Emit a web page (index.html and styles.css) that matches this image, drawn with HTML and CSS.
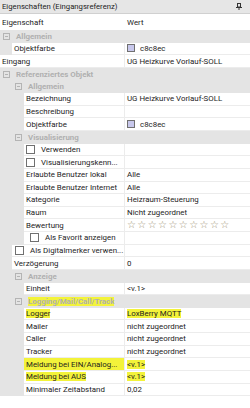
FILE: index.html
```html
<!DOCTYPE html>
<html>
<head>
<meta charset="utf-8">
<link rel="stylesheet" href="styles.css">
</head>
<body>
<div class="panel">
  <div class="titlebar">
    <span class="title">Eigenschaften (Eingangsreferenz)</span>
    <svg class="pin" width="6" height="7" viewBox="0 0 6 7"><rect x="1.5" y="0.5" width="3" height="3.5" fill="none" stroke="#333" stroke-width="1"/><rect x="0" y="4" width="6" height="1" fill="#333"/><rect x="2.5" y="5" width="1" height="2" fill="#333"/></svg>
  </div>
  <div class="row header"><div class="label">Eigenschaft</div><div class="value">Wert</div></div>

  <div class="row group"><span class="tog l0"></span><span class="gtext">Allgemein</span></div>
  <div class="row"><div class="ind i1"></div><div class="label">Objektfarbe</div><div class="value"><span class="swatch"></span>c8c8ec</div></div>
  <div class="row"><div class="label">Eingang</div><div class="value">UG Heizkurve Vorlauf-SOLL</div></div>

  <div class="row group"><span class="tog l0"></span><span class="gtext">Referenziertes Objekt</span></div>
  <div class="row group"><span class="tog l1"></span><span class="gtext">Allgemein</span></div>
  <div class="row"><div class="ind i2"></div><div class="label">Bezeichnung</div><div class="value">UG Heizkurve Vorlauf-SOLL</div></div>
  <div class="row"><div class="ind i2"></div><div class="label">Beschreibung</div><div class="value"></div></div>
  <div class="row"><div class="ind i2"></div><div class="label">Objektfarbe</div><div class="value"><span class="swatch"></span>c8c8ec</div></div>
  <div class="row group"><span class="tog l1"></span><span class="gtext">Visualisierung</span></div>
  <div class="row"><div class="ind i2"></div><div class="label"><span class="cb"></span>Verwenden</div><div class="value"></div></div>
  <div class="row"><div class="ind i2"></div><div class="label"><span class="cb"></span>Visualisierungskenn...</div><div class="value"></div></div>
  <div class="row"><div class="ind i2"></div><div class="label">Erlaubte Benutzer lokal</div><div class="value">Alle</div></div>
  <div class="row"><div class="ind i2"></div><div class="label">Erlaubte Benutzer Internet</div><div class="value">Alle</div></div>
  <div class="row"><div class="ind i2"></div><div class="label">Kategorie</div><div class="value">Heizraum-Steuerung</div></div>
  <div class="row"><div class="ind i2"></div><div class="label">Raum</div><div class="value">Nicht zugeordnet</div></div>
  <div class="row"><div class="ind i2"></div><div class="label">Bewertung</div><div class="value stars">☆☆☆☆☆☆☆☆☆☆</div></div>
  <div class="row"><div class="ind i2"></div><div class="label"><span class="cb cb2"></span>Als Favorit anzeigen</div><div class="value"></div></div>
  <div class="row"><div class="ind i1"></div><div class="label"><span class="cb cb3"></span>Als Digitalmerker verwen...</div><div class="value"></div></div>
  <div class="row"><div class="ind i1"></div><div class="label">Verzögerung</div><div class="value">0</div></div>
  <div class="row group"><span class="tog l1"></span><span class="gtext">Anzeige</span></div>
  <div class="row"><div class="ind i2"></div><div class="label">Einheit</div><div class="value">&lt;v.1&gt;</div></div>
  <div class="row group"><span class="tog l1"></span><span class="gtext hl">Logging/Mail/Call/Track</span></div>
  <div class="row"><div class="ind i2"></div><div class="label"><span class="hl">Logger</span></div><div class="value"><span class="hl">LoxBerry MQTT</span></div></div>
  <div class="row"><div class="ind i2"></div><div class="label">Mailer</div><div class="value">nicht zugeordnet</div></div>
  <div class="row"><div class="ind i2"></div><div class="label">Caller</div><div class="value">nicht zugeordnet</div></div>
  <div class="row"><div class="ind i2"></div><div class="label">Tracker</div><div class="value">nicht zugeordnet</div></div>
  <div class="row"><div class="ind i2"></div><div class="label hlcell">Meldung bei EIN/Analog...</div><div class="value"><span class="hl">&lt;v.1&gt;</span></div></div>
  <div class="row"><div class="ind i2"></div><div class="label"><span class="hl">Meldung bei AUS</span></div><div class="value"><span class="hl">&lt;v.1&gt;</span></div></div>
  <div class="row"><div class="ind i2"></div><div class="label">Minimaler Zeitabstand</div><div class="value">0,02</div></div>
</div>
</body>
</html>
```

FILE: styles.css
```css
html, body { margin: 0; padding: 0; background: #fff; }
body { width: 250px; height: 408px; overflow: hidden; font-family: Roboto, "Noto Sans", sans-serif; font-size: 7.9px; color: #1c1c1c; }
.panel { width: 250px; }
.titlebar { height: 14px; background: #e6e6e6; border-bottom: 1px solid #d0d0d0; display: flex; align-items: center; justify-content: space-between; padding: 0 8px 0 2px; box-sizing: border-box; }
.title { font-size: 7.7px; }
.pin { display: block; }
.row { display: flex; height: 12.64px; align-items: stretch; }
.row .label { width: 125px; flex: none; display: flex; align-items: center; padding-left: 2px; box-sizing: border-box; background: #fff; border-bottom: 1px solid #ececec; border-right: 1px solid #ececec; white-space: nowrap; overflow: hidden; }
.row .value { flex: 1; display: flex; align-items: center; padding-left: 2px; background: #fff; border-bottom: 1px solid #ececec; white-space: nowrap; }
.ind { flex: none; background: #e4e4e4; }
.ind.i1 { width: 12px; }
.ind.i2 { width: 24px; }
.i1 + .label { width: 113px; }
.i2 + .label { width: 101px; }
.header .label, .header .value { border: none; }
.header { height: 16px; }
.group { background: #e4e4e4; align-items: center; }
.tog { width: 5px; height: 5px; border: 1px solid #b4b4b4; position: relative; flex: none; }
.tog::after { content: ""; position: absolute; left: 1px; top: 2px; width: 3px; height: 1px; background: #b4b4b4; }
.tog.l0 { margin-left: 3px; margin-right: 6px; }
.tog.l1 { margin-left: 15px; margin-right: 6px; }
.gtext { font-weight: bold; color: #b0b0b0; }
.swatch { width: 8px; height: 8px; background: #c8c8ec; border: 1px solid #707070; box-sizing: border-box; margin-right: 5px; }
.cb { width: 7px; height: 7px; border: 1px solid #707070; background: #fff; margin-right: 6px; flex: none; }
.cb2 { margin-left: 4px; }
.cb3 { margin-left: 1px; }
.stars { color: #9c9070; letter-spacing: 1.4px; font-family: "DejaVu Sans", sans-serif; font-size: 10px; line-height: 1; padding-left: 3px; overflow: hidden; }
.hl { background: #f3f33a; }
.label.hlcell { background: #f3f33a; }
```
